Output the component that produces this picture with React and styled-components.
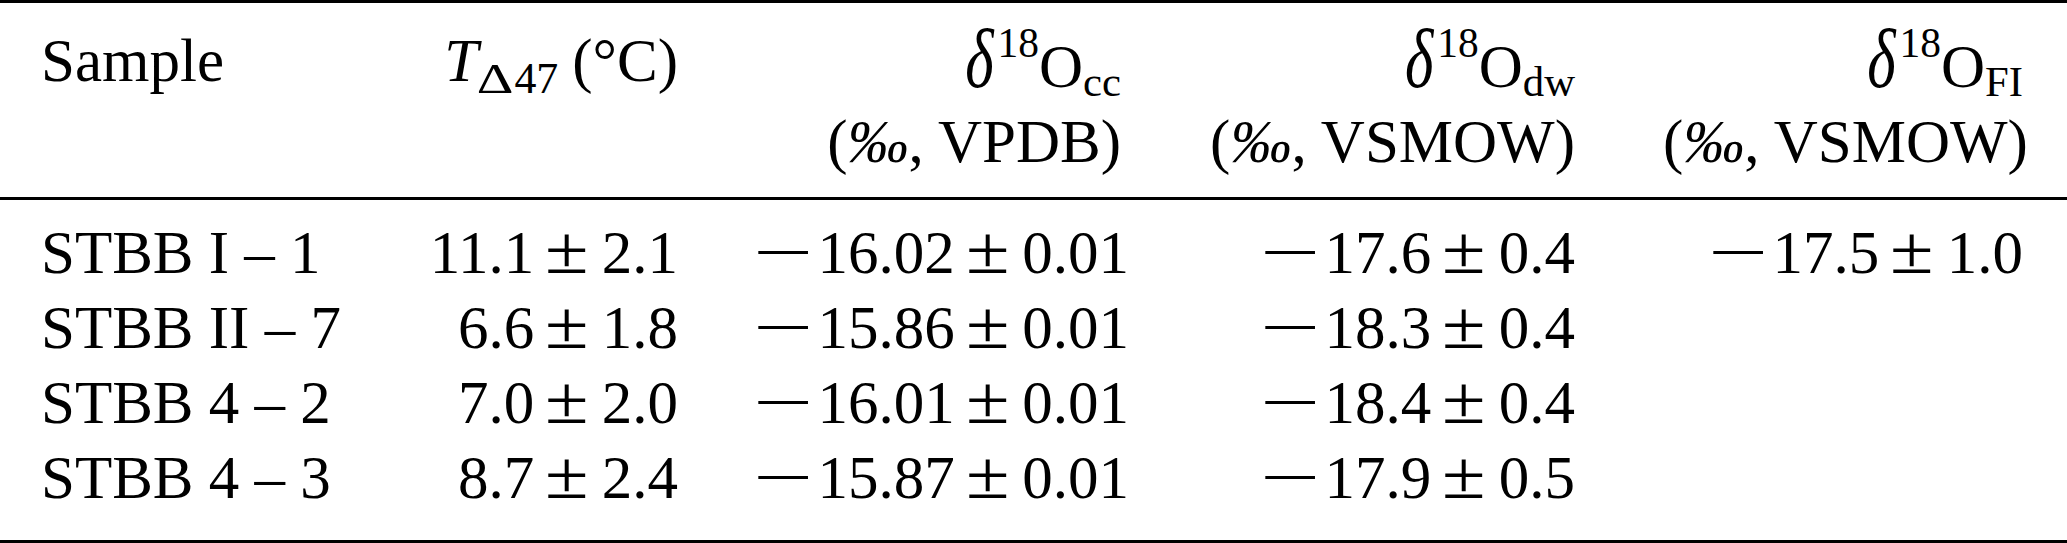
import styled, { createGlobalStyle } from "styled-components";

const Global = createGlobalStyle`
  html, body {
    margin: 0;
    padding: 0;
    background: #fff;
  }
  body {
    width: 2067px;
    height: 543px;
    overflow: hidden;
  }
`;

const Table = styled.table`
  width: 2067px;
  table-layout: fixed;
  border-collapse: separate;
  border-spacing: 0;
  font-family: "Liberation Serif", "Times New Roman", serif;
  font-size: 61px;
  line-height: 75px;
  color: #000;
  border-top: 3px solid #000;
  border-bottom: 3px solid #000;
`;

const Col = styled.col`
  width: ${(p) => p.$w}px;
`;

const Cell = styled.td`
  padding: 0 44px;
  padding-left: ${(p) => (p.$first ? 41 : 44)}px;
  padding-top: ${(p) => p.$top || 0}px;
  padding-bottom: ${(p) => p.$bottom || 0}px;
  text-align: ${(p) => (p.$first ? "left" : "right")};
  white-space: nowrap;
  font-weight: normal;
  vertical-align: top;
  border-bottom: ${(p) => (p.$rule ? "3px solid #000" : "none")};
`;

const Head = styled(Cell).attrs({ as: "th" })``;

const Em = styled.i`
  font-style: italic;
`;

const DeltaGlyph = styled.i`
  display: inline-block;
  font-style: italic;
  line-height: 1;
  transform: scaleY(1.4);
  transform-origin: 50% 84%;
`;

const Sup = styled.span`
  font-size: 0.68em;
  vertical-align: 0.72em;
  line-height: 0;
  margin-left: 4px;
`;

const Sub = styled.span`
  font-size: 0.7em;
  vertical-align: -0.2em;
  line-height: 0;
`;

const TempSub = styled.span`
  font-size: 0.72em;
  vertical-align: -0.28em;
  line-height: 0;
  margin-right: 14px;
`;

const Wide = styled.span`
  display: inline-block;
  line-height: 1;
  margin: 0 5px 0 3px;
  transform: scale(1.3, 0.95);
  transform-origin: 50% 84%;
`;

const Minus = styled.span`
  display: inline-block;
  line-height: 1;
  margin-right: 17px;
  transform: scaleX(1.75);
`;

const Pm = styled.span`
  display: inline-block;
  line-height: 1;
  margin: 0 18px 0 16px;
  transform: scale(1.3, 1.1);
  transform-origin: 50% 84%;
`;

const rows = [
  { name: "STBB I – 1", t: ["11.1", "2.1"], cc: ["16.02", "0.01"], dw: ["17.6", "0.4"], fi: ["17.5", "1.0"] },
  { name: "STBB II – 7", t: ["6.6", "1.8"], cc: ["15.86", "0.01"], dw: ["18.3", "0.4"] },
  { name: "STBB 4 – 2", t: ["7.0", "2.0"], cc: ["16.01", "0.01"], dw: ["18.4", "0.4"] },
  { name: "STBB 4 – 3", t: ["8.7", "2.4"], cc: ["15.87", "0.01"], dw: ["17.9", "0.5"] },
];

const Value = ({ neg, v }) => {
  if (!v) return null;
  return (
    <>
      {neg && <Minus>−</Minus>}
      {v[0]}
      <Pm>±</Pm>
      {v[1]}
    </>
  );
};

const Delta = ({ sub }) => (
  <>
    <DeltaGlyph>δ</DeltaGlyph>
    <Sup>18</Sup>O<Sub>{sub}</Sub>
  </>
);

const App = () => {
  return (
    <>
      <Global />
      <Table>
        <colgroup>
          <Col $w={385} />
          <Col $w={337} />
          <Col $w={443} />
          <Col $w={454} />
          <Col $w={448} />
        </colgroup>
        <thead>
          <tr>
            <Head $first $top={20}>Sample</Head>
            <Head $top={20}>
              <Em>T</Em>
              <TempSub><Wide>Δ</Wide>47</TempSub>(°C)
            </Head>
            <Head $top={26}><Delta sub="cc" /></Head>
            <Head $top={26}><Delta sub="dw" /></Head>
            <Head $top={26}><Delta sub="FI" /></Head>
          </tr>
          <tr>
            <Head $first $rule $bottom={18} />
            <Head $rule $bottom={18} />
            <Head $rule $bottom={18}>(<Em>‰</Em>, VPDB)</Head>
            <Head $rule $bottom={18}>(<Em>‰</Em>, VSMOW)</Head>
            <Head $rule $bottom={18}>(<Em>‰</Em>, VSMOW)</Head>
          </tr>
        </thead>
        <tbody>
          {rows.map((r, i) => {
            const top = i === 0 ? 15 : 0;
            const bottom = i === rows.length - 1 ? 25 : 0;
            return (
              <tr key={r.name}>
                <Cell $first $top={top} $bottom={bottom}>{r.name}</Cell>
                <Cell $top={top} $bottom={bottom}><Value v={r.t} /></Cell>
                <Cell $top={top} $bottom={bottom}><Value neg v={r.cc} /></Cell>
                <Cell $top={top} $bottom={bottom}><Value neg v={r.dw} /></Cell>
                <Cell $top={top} $bottom={bottom}><Value neg v={r.fi} /></Cell>
              </tr>
            );
          })}
        </tbody>
      </Table>
    </>
  );
};

export default App;
